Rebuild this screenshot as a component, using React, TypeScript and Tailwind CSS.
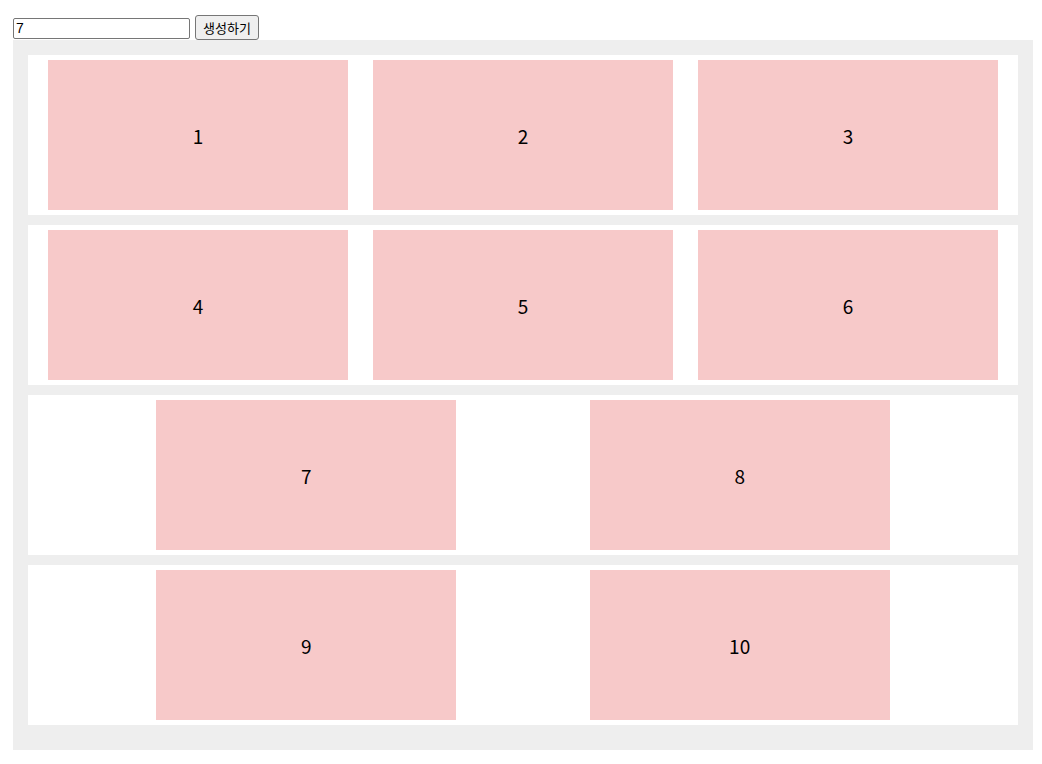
import { useState } from 'react';

const font = { fontFamily: '"Noto Sans CJK KR", "Noto Sans", sans-serif' };

function chunk(items: number[], perRow: number[]) {
  const rows: number[][] = [];
  let i = 0;
  for (const n of perRow) {
    rows.push(items.slice(i, i + n));
    i += n;
  }
  return rows;
}

export default function App() {
  const [count, setCount] = useState('7');
  const items = Array.from({ length: 10 }, (_, i) => i + 1);
  const rows = chunk(items, [3, 3, 2, 2]);

  return (
    <div className="pl-[13px] pt-[15px] bg-white min-h-screen" style={font}>
      <div className="flex items-center h-[25px]">
        <input
          value={count}
          onChange={(e) => setCount(e.target.value)}
          className="w-[177px] h-[21px] mt-[1px] border border-[#767676] rounded-[2px] px-[2px] text-[14px] text-black outline-none"
          style={{ fontFamily: '"Liberation Sans", Arial, sans-serif' }}
        />
        <button className="ml-[5px] h-[25px] px-[7px] bg-[#efefef] border border-[#767676] rounded-[3px] text-[13px] text-black leading-none">
          생성하기
        </button>
      </div>

      <div className="w-[1020px] bg-[#eeeeee] p-[15px]">
        {rows.map((row, r) => (
          <div key={r} className="flex justify-evenly bg-white mb-[10px]">
            {row.map((n) => (
              <div
                key={n}
                className="m-[5px] w-[300px] h-[150px] pt-[2px] bg-[#f7c9c9] flex items-center justify-center text-[19px] text-black"
              >
                {n}
              </div>
            ))}
          </div>
        ))}
      </div>
    </div>
  );
}
